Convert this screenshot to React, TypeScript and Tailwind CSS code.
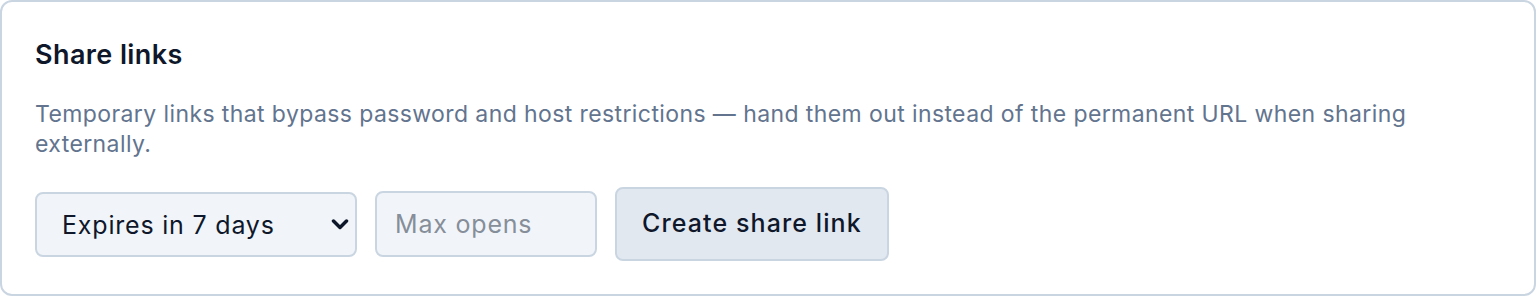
import { useState } from "react"

export default function App() {
    const [expiry, setExpiry] = useState("7")
    const [maxOpens, setMaxOpens] = useState("")

    return (
        <div className="w-[1536px] h-[296px] bg-white font-['Inter',sans-serif]">
            <div className="h-full border-2 border-slate-300 rounded-xl bg-white pl-[33px] pr-[33px] pt-[37px]">
                <h2 className="text-[27px] leading-[32px] tracking-[0.4px] font-semibold text-slate-900">Share links</h2>
                <p className="mt-[28px] text-[23px] leading-[30px] tracking-[0.4px] text-slate-500">
                    Temporary links that bypass password and host restrictions — hand them out instead of the permanent URL when sharing externally.
                </p>

                <div className="mt-[28px] flex items-center gap-[18px]">
                    <div className="relative w-[322px] h-[65px]">
                        <select
                            value={expiry}
                            onChange={(e) => setExpiry(e.target.value)}
                            className="appearance-none w-full h-full border-2 border-slate-300 rounded-lg bg-slate-100 pl-[25px] pr-12 pt-[3px] text-[25px] tracking-[0.8px] text-slate-900 outline-none"
                        >
                            <option value="1">Expires in 1 day</option>
                            <option value="7">Expires in 7 days</option>
                            <option value="30">Expires in 30 days</option>
                        </select>
                        <svg
                            className="absolute right-[8px] top-[27px] pointer-events-none"
                            width="18"
                            height="11"
                            viewBox="0 0 18 11"
                            fill="none"
                        >
                            <polyline points="2.5,2 9,8.5 15.5,2" stroke="#0f172a" strokeWidth="3.5" strokeLinecap="round" strokeLinejoin="round" />
                        </svg>
                    </div>

                    <input
                        value={maxOpens}
                        onChange={(e) => setMaxOpens(e.target.value)}
                        placeholder="Max opens"
                        className="w-[222px] h-[66px] border-2 border-slate-300 rounded-lg bg-slate-100 px-[18px] text-[25px] tracking-[0.8px] text-slate-900 placeholder:text-[#868e99] outline-none"
                    />

                    <button className="h-[74px] px-[25px] border-2 border-slate-300 rounded-lg bg-slate-200 text-[25px] tracking-[1.1px] font-medium text-slate-900">
                        Create share link
                    </button>
                </div>
            </div>
        </div>
    )
}
